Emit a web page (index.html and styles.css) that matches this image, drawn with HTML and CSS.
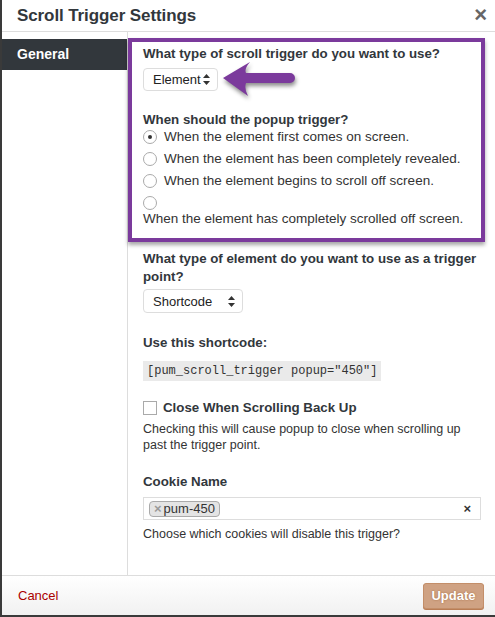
FILE: index.html
```html
<!DOCTYPE html>
<html lang="en">
<head>
    <meta charset="UTF-8">
    <meta name="viewport" content="width=device-width, initial-scale=1.0">
    <title>Scroll Trigger Settings</title>
    <link rel="stylesheet" href="styles.css">
</head>
<body>
    <div class="modal">
        <header class="modal-head">
            <h1>Scroll Trigger Settings</h1>
            <span class="close">&times;</span>
        </header>

        <div class="modal-body">
            <nav class="tabs">
                <a class="tab active">General</a>
            </nav>

            <div class="panel">
                <!-- highlighted part of the form -->
                <div class="highlight">
                    <label class="field-label">What type of scroll trigger do you want to use?</label>
                    <div class="select select-type">
                        <span>Element</span>
                        <svg class="updown" width="7" height="11" viewBox="0 0 7 11"><path d="M3.5 0 L7 4 L0 4 Z M3.5 11 L7 7 L0 7 Z" fill="#333"/></svg>
                    </div>

                    <label class="field-label q-when">When should the popup trigger?</label>
                    <div class="radio-list">
                        <div class="radio-row"><span class="radio checked"></span>When the element first comes on screen.</div>
                        <div class="radio-row"><span class="radio"></span>When the element has been completely revealed.</div>
                        <div class="radio-row"><span class="radio"></span>When the element begins to scroll off screen.</div>
                        <div class="radio-row wrap"><span class="radio"></span><span class="wrap-text">When the element has completely scrolled off screen.</span></div>
                    </div>

                    <svg class="arrow" width="80" height="44" viewBox="0 0 80 44">
                        <path d="M3 19 L30 3 Q24 10 26 14 L70 14 A5 5 0 0 1 70 24 L26 24 Q24 30 28 37 Z" fill="#7b3a9c"/>
                    </svg>
                </div>

                <div class="fields">
                    <label class="field-label q-element">What type of element do you want to use as a trigger point?</label>
                    <div class="select select-element">
                        <span>Shortcode</span>
                        <svg class="updown" width="7" height="11" viewBox="0 0 7 11"><path d="M3.5 0 L7 4 L0 4 Z M3.5 11 L7 7 L0 7 Z" fill="#333"/></svg>
                    </div>

                    <label class="field-label q-shortcode">Use this shortcode:</label>
                    <code class="shortcode">[pum_scroll_trigger popup="450"]</code>

                    <div class="check-row">
                        <span class="checkbox"></span>
                        <span class="check-label">Close When Scrolling Back Up</span>
                    </div>
                    <p class="desc">Checking this will cause popup to close when scrolling up past the trigger point.</p>

                    <label class="field-label q-cookie">Cookie Name</label>
                    <div class="tag-input">
                        <span class="tag"><span class="tag-x">&times;</span>pum-450</span>
                        <span class="clear">&times;</span>
                    </div>
                    <p class="desc hint">Choose which cookies will disable this trigger?</p>
                </div>
            </div>
        </div>

        <footer class="modal-foot">
            <a class="cancel" href="#">Cancel</a>
            <button class="update" disabled>Update</button>
        </footer>
    </div>
</body>
</html>
```

FILE: styles.css
```css
body {
    margin: 0;
    padding: 0;
    background-color: #fff;
    font-family: "Liberation Sans", Arial, sans-serif;
    font-size: 13px;
    color: #23282d;
}

.modal {
    height: 615px;
    display: flex;
    flex-direction: column;
    border-left: 2px solid #3a3a3a;
    border-bottom: 2px solid #3a3a3a;
    background-color: #fff;
}

.modal-head {
    height: 31px;
    border-bottom: 1px solid #ddd;
    display: flex;
    justify-content: space-between;
    align-items: center;
    padding: 0 8px 0 15px;
}

.modal-head h1 {
    margin: 0;
    font-size: 17px;
    font-weight: 700;
    color: #32373c;
    letter-spacing: -0.1px;
}

.close {
    font-size: 22px;
    font-weight: 700;
    color: #666;
    line-height: 1;
    margin-top: -2px;
}

.modal-body {
    flex: 1;
    display: flex;
    min-height: 0;
}

.tabs {
    width: 125px;
    border-right: 1px solid #ddd;
    padding-top: 7px;
}

.tab {
    display: block;
    height: 31px;
    line-height: 31px;
    padding-left: 15px;
    font-size: 14px;
    font-weight: 700;
    color: #fff;
    text-decoration: none;
}

.tab.active {
    background-color: #32373c;
}

.panel {
    flex: 1;
}

.highlight {
    position: relative;
    margin: 6px 10px 0 0;
    border: 4px solid #7b3a9c;
    padding: 3px 11px 11px;
    box-shadow: 0 3px 4px rgba(0, 0, 0, 0.35);
}

.field-label {
    display: block;
    font-size: 13.3px;
    font-weight: 700;
    line-height: 18px;
    color: #32373c;
}

.select {
    display: flex;
    align-items: center;
    justify-content: space-between;
    box-sizing: border-box;
    border: 1px solid #ddd;
    border-radius: 4px;
    background-color: #fff;
    padding: 0 7px 0 9px;
    font-size: 13px;
    color: #222;
}

.select-type {
    width: 75px;
    height: 23px;
    margin-top: 5px;
}

.q-when {
    margin-top: 21px;
    line-height: 16px;
}

.radio-list {
    display: flex;
    flex-direction: column;
    gap: 2px;
    margin-top: -1px;
}

.radio-row {
    display: flex;
    align-items: center;
    line-height: 20px;
    font-size: 13.5px;
    color: #333;
}

.radio {
    box-sizing: border-box;
    width: 14px;
    height: 14px;
    border: 1px solid #aaa;
    border-radius: 50%;
    background-color: #fff;
    margin-right: 7px;
    position: relative;
    flex-shrink: 0;
}

.radio.checked::after {
    content: "";
    position: absolute;
    left: 4px;
    top: 4px;
    width: 4px;
    height: 4px;
    border-radius: 50%;
    background-color: #333;
}

.radio-row.wrap {
    flex-direction: column;
    align-items: flex-start;
    line-height: 16px;
}

.radio-row.wrap .radio {
    margin: 3px 0 1px;
}

.arrow {
    position: absolute;
    left: 88px;
    top: 17px;
    filter: drop-shadow(1px 3px 2px rgba(0, 0, 0, 0.45));
}

.fields {
    padding: 0 14px 0 15px;
}

.q-element {
    margin-top: 8px;
}

.select-element {
    width: 100px;
    height: 24px;
    margin-top: 3px;
}

.q-shortcode {
    margin-top: 21px;
}

.shortcode {
    display: inline-block;
    margin-top: 9px;
    padding: 0 4px;
    height: 20px;
    line-height: 20px;
    background-color: #eaeaea;
    font-family: "Liberation Mono", "Courier New", monospace;
    font-size: 12px;
    color: #333;
}

.check-row {
    display: flex;
    align-items: center;
    margin-top: 18px;
    line-height: 18px;
}

.checkbox {
    box-sizing: border-box;
    width: 14px;
    height: 14px;
    border: 1px solid #aaa;
    background-color: #fff;
    margin-right: 6px;
}

.check-label {
    font-size: 13.3px;
    font-weight: 700;
    color: #32373c;
}

.desc {
    margin: 4px 0 0;
    font-size: 12.5px;
    line-height: 16px;
    color: #333;
}

.q-cookie {
    margin-top: 20px;
}

.tag-input {
    display: flex;
    align-items: center;
    justify-content: space-between;
    box-sizing: border-box;
    height: 23px;
    margin-top: 6px;
    border: 1px solid #ddd;
    padding: 0 9px 0 5px;
}

.tag {
    display: inline-block;
    height: 14px;
    line-height: 14px;
    padding: 0 4px;
    border: 1px solid #aaa;
    border-radius: 4px;
    background-color: #e4e4e4;
    color: #333;
}

.tag-x {
    color: #999;
    font-weight: 700;
    margin-right: 2px;
}

.clear {
    font-weight: 700;
    color: #333;
}

.hint {
    margin-top: 6px;
}

.modal-foot {
    height: 39px;
    border-top: 1px solid #ddd;
    background: linear-gradient(#fff, #f1f1f1);
    display: flex;
    justify-content: space-between;
    align-items: center;
    padding: 0 11px 0 16px;
}

.cancel {
    color: #a00;
    text-decoration: none;
    font-size: 13px;
}

.update {
    width: 61px;
    height: 26px;
    border: 1px solid #c38e69;
    border-radius: 3px;
    background-color: #cfa283;
    color: #fff;
    font-family: "Liberation Sans", Arial, sans-serif;
    font-size: 13px;
    font-weight: 700;
    text-shadow: 0 0 2px #a0663d;
    box-shadow: 0 1px 0 #b97d55;
    padding: 0;
}
```
